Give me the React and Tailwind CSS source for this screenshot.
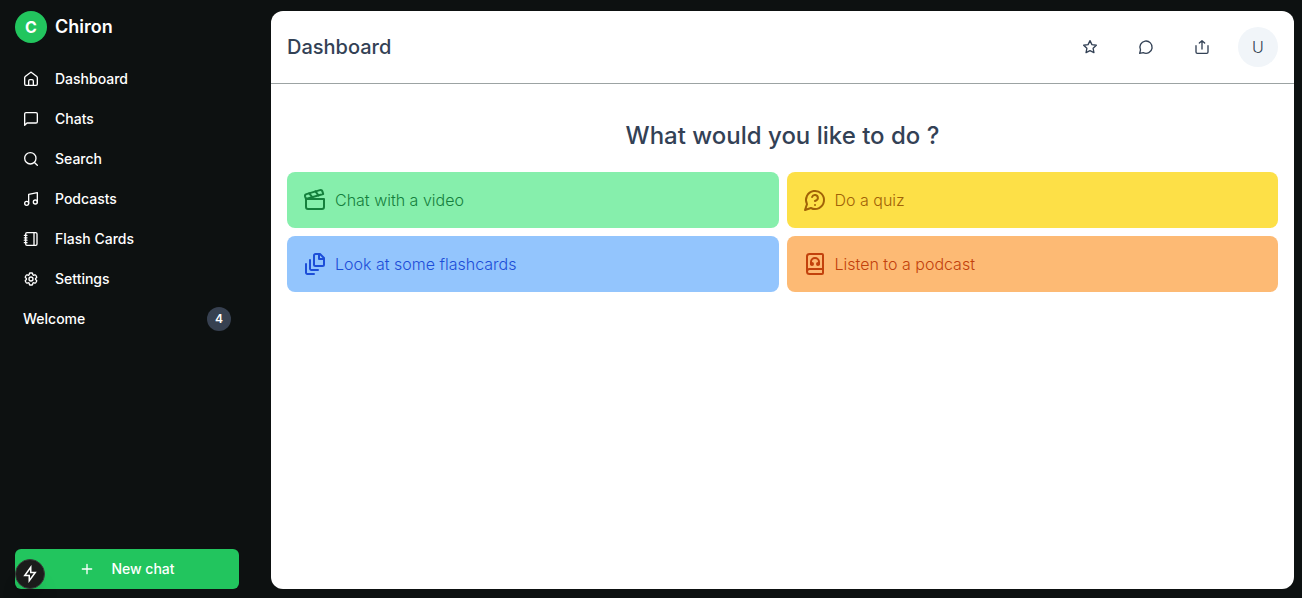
import { BookHeadphones, Clapperboard } from 'lucide-react';
import { HiOutlineCog6Tooth } from 'react-icons/hi2';

const Icon = ({ children, size = 16, stroke = 2, className = '' }) => (
  <svg
    width={size}
    height={size}
    viewBox="0 0 24 24"
    fill="none"
    stroke="currentColor"
    strokeWidth={stroke}
    strokeLinecap="round"
    strokeLinejoin="round"
    className={`shrink-0 ${className}`}
    aria-hidden="true"
  >
    {children}
  </svg>
);

const HomeIcon = () => (
  <Icon>
    <path d="M2.500 10a2 2 0 0 1 .8-1.600l7.400-5.900a2 2 0 0 1 2.600 0l7.400 5.900a2 2 0 0 1 .8 1.600v9.500a2 2 0 0 1-2 2h-15a2 2 0 0 1-2-2z" />
    <path d="M8.500 21v-6a2 2 0 0 1 2-2h3a2 2 0 0 1 2 2v6" />
  </Icon>
);

const ChatIcon = () => (
  <Icon>
    <path d="M2.500 21.500v-17a2 2 0 0 1 2-2h15a2 2 0 0 1 2 2V16a2 2 0 0 1-2 2H6z" />
  </Icon>
);

const SearchIcon = () => (
  <Icon>
    <circle cx="11" cy="11" r="8.500" />
    <path d="m17.500 17.500 4 4" />
  </Icon>
);

const MusicIcon = () => (
  <Icon>
    <circle cx="5.500" cy="18.500" r="3" />
    <circle cx="18.500" cy="16.500" r="3" />
    <path d="M8.500 18.500V5l13-2.500v14" />
  </Icon>
);

const NotebookIcon = () => (
  <Icon>
    <rect x="4" y="2.500" width="17" height="19" rx="2" />
    <path d="M16.500 2.500v19M2 6.500h4M2 10.200h4M2 13.800h4M2 17.500h4" />
  </Icon>
);

const SettingsIcon = () => <HiOutlineCog6Tooth size={16} strokeWidth={2} className="shrink-0" />;

const QuizIcon = () => (
  <Icon size={24}>
    <path d="M7.900 20A9 9 0 1 0 4 16.100L2 22Z" />
    <path d="M9.090 9a3 3 0 0 1 5.830 1c0 2-3 3-3 3M12 17h.01" />
  </Icon>
);

const PagesIcon = () => (
  <Icon size={24}>
    <path d="M16 2v5h5" />
    <path d="M21 6v6.500c0 .8-.7 1.500-1.500 1.500h-7c-.8 0-1.500-.7-1.500-1.500v-9c0-.8.7-1.500 1.500-1.500H17l4 4z" />
    <path d="M7 8v8.800c0 .3.2.6.4.8.2.2.5.4.8.4H15" />
    <path d="M3 12v8.800c0 .3.2.6.4.8.2.2.5.4.8.4H11" />
  </Icon>
);

const menu = [
  { label: 'Dashboard', icon: HomeIcon },
  { label: 'Chats', icon: ChatIcon },
  { label: 'Search', icon: SearchIcon },
  { label: 'Podcasts', icon: MusicIcon },
  { label: 'Flash Cards', icon: NotebookIcon },
  { label: 'Settings', icon: SettingsIcon },
];

const actions = [
  { label: 'Chat with a video', icon: Clapperboard, color: 'bg-[#86efac] text-[#15803d]' },
  { label: 'Do a quiz', icon: QuizIcon, color: 'bg-[#fde047] text-[#a16207]' },
  { label: 'Look at some flashcards', icon: PagesIcon, color: 'bg-[#93c5fd] text-[#1d4ed8]' },
  { label: 'Listen to a podcast', icon: BookHeadphones, color: 'bg-[#fdba74] text-[#c2410c]' },
];

const Sidebar = () => (
  <aside className="w-56 shrink-0 flex flex-col text-white">
    <div className="flex items-center gap-2">
      <span className="size-8 rounded-full bg-[#22c55e] flex items-center justify-center font-bold">C</span>
      <span className="text-lg font-semibold">Chiron</span>
    </div>

    <nav className="mt-4">
      <ul>
        {menu.map(item => (
          <li key={item.label}>
            <a href="#" className="flex items-center gap-4 h-10 px-2 text-sm font-medium">
              <item.icon />
              {item.label}
            </a>
          </li>
        ))}
        <li>
          <a href="#" className="flex items-center justify-between h-10 px-2 text-sm font-medium">
            Welcome
            <span className="h-6 px-2 rounded-full bg-[#374151] flex items-center text-xs font-semibold">4</span>
          </a>
        </li>
      </ul>
    </nav>

    <div className="relative mt-auto">
      <button className="w-full h-10 rounded-md bg-[#22c55e] flex items-center justify-center gap-4 text-sm font-medium">
        <Icon>
          <path d="M12 5v14M5 12h14" />
        </Icon>
        New chat
      </button>
      <button
        aria-label="Static route"
        className="absolute bottom-0 left-0 size-[30px] rounded-full bg-[#1b1b1b] border border-[#3a3a3a] shadow-xl flex items-center justify-center"
      >
        <Icon size={18}>
          <path strokeLinejoin="miter" d="M13 3 5 14h6v7l8-11h-6z" />
        </Icon>
      </button>
    </div>
  </aside>
);

const HeaderButton = ({ label, children }) => (
  <button aria-label={label} className="size-10 flex items-center justify-center">
    <Icon>{children}</Icon>
  </button>
);

const Header = () => (
  <header className="flex items-center justify-between p-4 border-b border-[#9ca3a3]">
    <h1 className="text-xl font-medium">Dashboard</h1>
    <div className="flex items-center gap-4">
      <HeaderButton label="Favourite">
        <path d="m12 2.500 2.900 5.900 6.600 1-4.800 4.600 1.200 6.500-5.900-3-5.900 3L7.300 14 2.500 9.400l6.600-1z" />
      </HeaderButton>
      <HeaderButton label="Comments">
        <path d="M7.900 20.500A9.200 9.200 0 1 0 3.800 16.400L2.500 21.500Z" />
      </HeaderButton>
      <HeaderButton label="Share">
        <path d="M12 15V2.500M8 6l4-3.500L16 6M3 10v9.500a2 2 0 0 0 2 2h14a2 2 0 0 0 2-2V10" />
      </HeaderButton>
      <button aria-label="Account" className="size-10 rounded-full bg-[#f1f5f9] font-light">U</button>
    </div>
  </header>
);

const App = () => (
  <div className="min-h-screen flex gap-8 bg-[#0d1111] pt-[11px] pr-2 pb-[9px] pl-[15px] font-['Inter',sans-serif]">
    <Sidebar />
    <main className="flex-1 min-w-0 rounded-xl bg-white text-[#334155]">
      <Header />
      <section className="px-4 pt-9">
        <h2 className="text-2xl font-medium text-center">What would you like to do ?</h2>
        <div className="mt-5 grid grid-cols-2 gap-2">
          {actions.map(action => (
            <button key={action.label} className={`flex items-center gap-2 p-4 rounded-lg font-light ${action.color}`}>
              <action.icon size={24} />
              {action.label}
            </button>
          ))}
        </div>
      </section>
    </main>
  </div>
);

export default App;
